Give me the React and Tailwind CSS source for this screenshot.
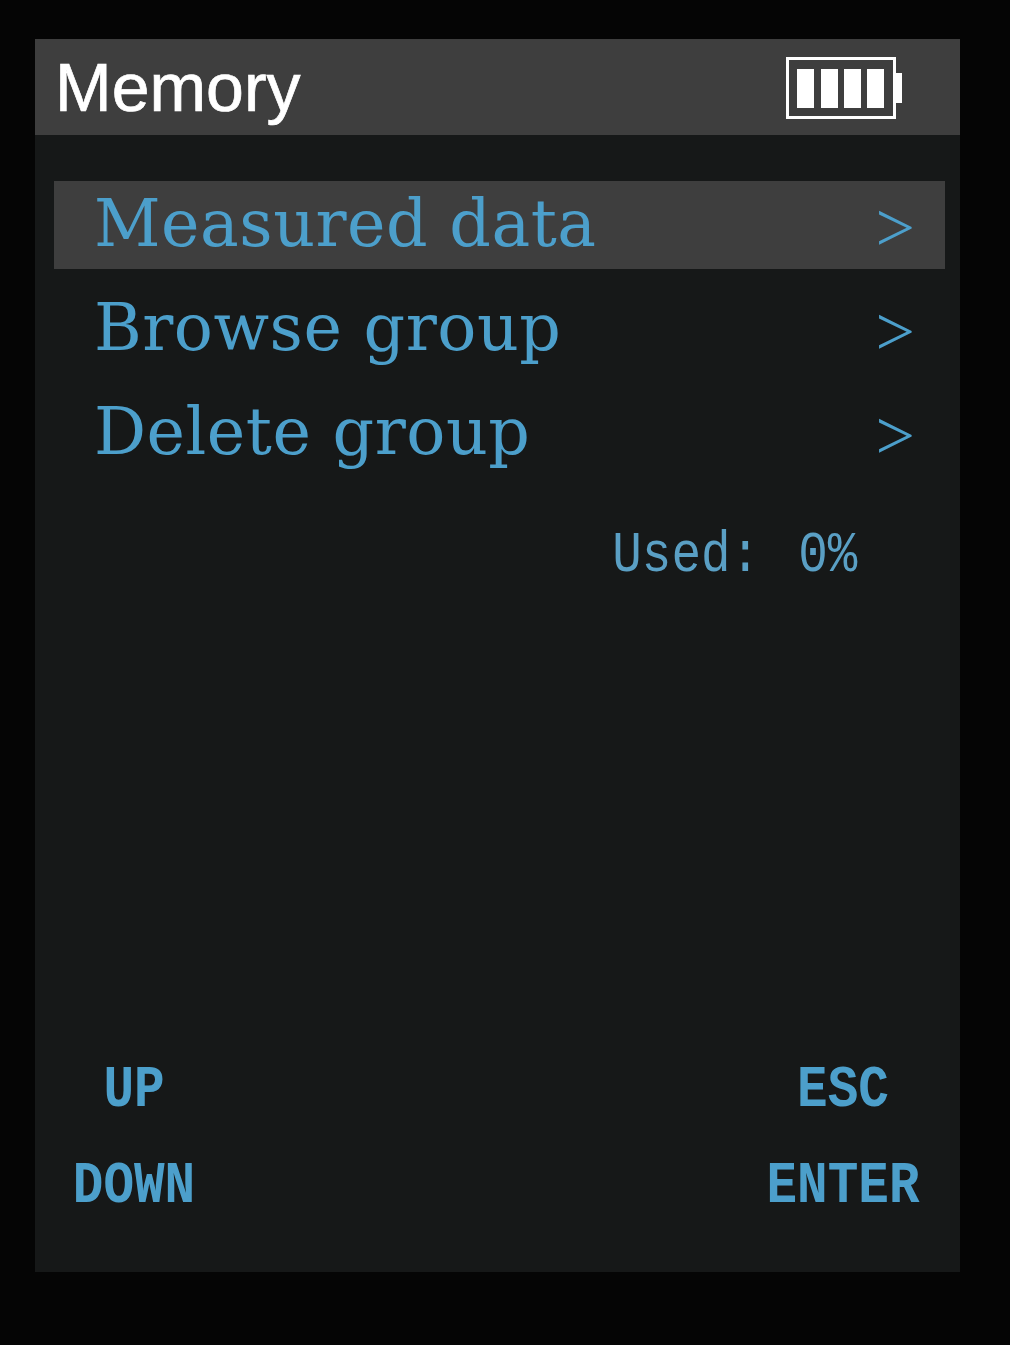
const menuItems = ['Measured data', 'Browse group', 'Delete group'];

const Battery = () => (
  <svg width="118" height="64" viewBox="0 0 118 64" className="mt-[4px] text-white">
    <rect x="1.5" y="1.5" width="107" height="59" fill="none" stroke="currentColor" strokeWidth="3" />
    <rect x="11" y="12" width="17" height="39" fill="currentColor" />
    <rect x="35" y="12" width="17" height="39" fill="currentColor" />
    <rect x="58" y="12" width="17" height="39" fill="currentColor" />
    <rect x="81" y="12" width="17" height="39" fill="currentColor" />
    <rect x="108" y="16" width="8" height="30" fill="currentColor" />
  </svg>
);

const MenuRow = ({ label, selected }) => (
  <div className={`flex h-[88px] items-center justify-between pl-[40px] pr-[30px] ${selected ? 'bg-[#3e3e3e]' : ''}`}>
    <span className="font-['DejaVu_Serif',serif] text-[65px] leading-none tracking-[0.5px] text-[#4c9fcb] blur-[0.6px] -translate-y-[2px]">
      {label}
    </span>
    <span className="font-['Liberation_Serif',serif] text-[70px] leading-none text-[#4c9fcb] blur-[0.5px] translate-y-[3px]">&gt;</span>
  </div>
);

const SoftKey = ({ label }) => (
  <div className="flex h-[50px] items-center justify-center font-['Liberation_Mono',monospace] text-[60px] font-bold leading-none text-[#4c9fcb] blur-[0.6px] scale-x-[.85]">
    {label}
  </div>
);

export default function App() {
  return (
    <div className="min-h-[1345px] w-[1010px] bg-[#050505] pl-[35px] pt-[39px]">
      <div className="flex h-[1233px] w-[925px] flex-col bg-[#161818]">
        <header className="flex h-[96px] items-center justify-between bg-[#3e3e3e] pl-[20px] pr-[56px]">
          <span className="font-['Liberation_Sans',sans-serif] text-[68px] leading-none text-white [-webkit-text-stroke:0.7px_white] blur-[0.5px]">Memory</span>
          <Battery />
        </header>

        <div className="ml-[19px] mr-[15px] mt-[46px] flex flex-col gap-[16px]">
          {menuItems.map((item, i) => (
            <MenuRow key={item} label={item} selected={i === 0} />
          ))}
        </div>

        <div className="mr-[103px] mt-[50px] flex justify-end">
          <span className="origin-right scale-x-[.85] whitespace-pre font-['Liberation_Mono',monospace] text-[58px] leading-none [word-spacing:10px] text-[#5a9fc4] blur-[0.6px]">
            Used: 0%
          </span>
        </div>

        <div className="mt-auto flex justify-between pb-[61px] pl-[38px] pr-[41px]">
          <div className="flex w-[122px] flex-col gap-[46px]">
            <SoftKey label="UP" />
            <SoftKey label="DOWN" />
          </div>
          <div className="flex w-[152px] flex-col gap-[46px]">
            <SoftKey label="ESC" />
            <SoftKey label="ENTER" />
          </div>
        </div>
      </div>
    </div>
  );
}
